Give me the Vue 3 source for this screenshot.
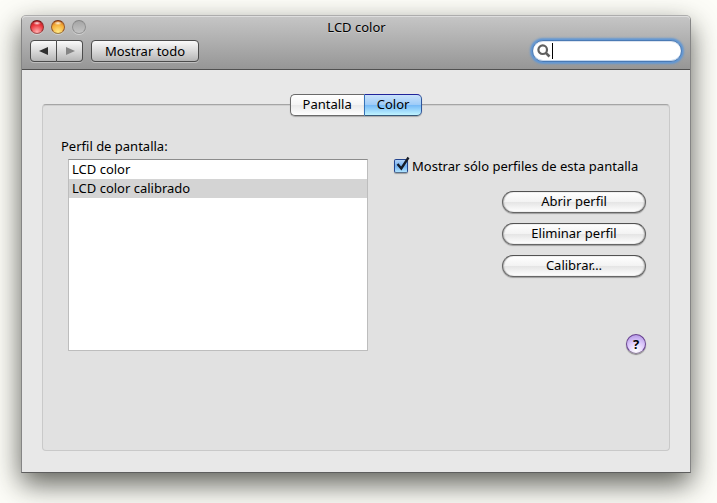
<template>
  <div class="desktop">
    <main class="window">
      <header class="toolbar">
        <div class="titlebar">
          <div class="lights">
            <button class="light red" type="button" aria-label="Cerrar"></button>
            <button class="light amber" type="button" aria-label="Minimizar"></button>
            <button class="light off" type="button" aria-label="Zoom" disabled></button>
          </div>
          <h1 class="title">LCD color</h1>
        </div>
        <div class="tools">
          <div class="nav">
            <button type="button" aria-label="Atrás">
              <svg width="10" height="10" viewBox="0 0 10 10"><path d="M9 1V9L0 5Z" fill="#303030" /></svg>
            </button>
            <button type="button" aria-label="Adelante" disabled>
              <svg width="10" height="10" viewBox="0 0 10 10"><path d="M1 1V9L10 5Z" fill="#858585" /></svg>
            </button>
          </div>
          <button class="show-all" type="button">Mostrar todo</button>
          <div class="search">
            <svg width="14" height="14" viewBox="0 0 14 14" fill="none" stroke="#606060">
              <circle cx="5.7" cy="5.7" r="4.3" stroke-width="2.2" />
              <path d="M8.8 8.8L12.5 12.5" stroke-width="2.6" />
            </svg>
            <span class="caret"></span>
            <input v-model="query" type="text" aria-label="Buscar" />
          </div>
        </div>
      </header>

      <div class="content">
        <div class="tabs" role="tablist">
          <button
            v-for="tab in tabs"
            :key="tab"
            type="button"
            role="tab"
            :aria-selected="tab === activeTab"
            :class="{ active: tab === activeTab }"
            @click="activeTab = tab"
          >{{ tab }}</button>
        </div>

        <section class="panel">
          <div class="profiles">
            <label for="profiles">Perfil de pantalla:</label>
            <select id="profiles" v-model="profile" size="10">
              <option v-for="item in profiles" :key="item" :value="item">{{ item }}</option>
            </select>
          </div>

          <div class="actions">
            <div class="check">
              <span class="box">
                <input id="only-display" v-model="onlyDisplay" type="checkbox" />
                <svg v-if="onlyDisplay" width="17" height="17" viewBox="0 0 17 17">
                  <path d="M3.5 8L7.3 12.5L14.5 1.5" fill="none" stroke="#161b26" stroke-width="2.3" />
                </svg>
              </span>
              <label for="only-display">Mostrar sólo perfiles de esta pantalla</label>
            </div>
            <button v-for="action in actions" :key="action" class="pill" type="button">{{ action }}</button>
            <button class="help" type="button" aria-label="Ayuda">?</button>
          </div>
        </section>
      </div>
    </main>
  </div>
</template>

<script setup>
import { ref } from 'vue'

const tabs = ['Pantalla', 'Color']
const activeTab = ref('Color')

const profiles = ['LCD color', 'LCD color calibrado']
const profile = ref('LCD color calibrado')

const actions = ['Abrir perfil', 'Eliminar perfil', 'Calibrar…']
const onlyDisplay = ref(true)
const query = ref('')
</script>

<style>
body {
  margin: 0;
  background: #fdfdf8;
}
</style>

<style scoped>
.desktop {
  box-sizing: border-box;
  display: flex;
  min-height: 100vh;
  padding: 15px 26px 30px 21px;
  overflow: hidden;
  font-family: "Noto Sans", "Open Sans", sans-serif;
  font-size: 13px;
  line-height: 18px;
  color: #000;
}

button,
input,
select {
  box-sizing: border-box;
  margin: 0;
  padding: 0;
  font: inherit;
  color: inherit;
}

.window {
  box-sizing: border-box;
  flex: 1;
  display: flex;
  flex-direction: column;
  border: 1px solid #858585;
  border-top-color: #adadad;
  border-bottom-color: #5e5e5e;
  border-radius: 5px 5px 0 0;
  background: #e8e8e8;
  box-shadow: 0 11px 28px rgba(25, 27, 20, 0.7);
}

/* toolbar */
.toolbar {
  padding: 1px 7px 7px 8px;
  border-bottom: 1px solid #505050;
  border-radius: 4px 4px 0 0;
  background: linear-gradient(#c6c6c6, #969696);
  box-shadow: inset 0 1px #dedede;
}

.titlebar {
  display: grid;
  grid-template-columns: 1fr auto 1fr;
  align-items: center;
  height: 20px;
}

.lights {
  display: flex;
  gap: 7px;
}

.light {
  width: 14px;
  height: 14px;
  border: 1px solid;
  border-radius: 50%;
  box-shadow: 0 1px rgba(255, 255, 255, 0.4);
}

.red {
  border-color: #701414 #923030 #a85454;
  background: radial-gradient(ellipse 4px 2px at 50% 18%, #ffe8e8, transparent), radial-gradient(circle at 50% 90%, #ffb0b0, #e9343a 60%, #9d1218);
}

.amber {
  border-color: #7c3510 #95592a #a07d40;
  background: radial-gradient(ellipse 4px 2px at 50% 18%, #fff4e0, transparent), radial-gradient(circle at 50% 90%, #ffe987, #f5ae38 60%, #b95012);
}

.off {
  border-color: #858585 #8f8f8f #999;
  background: linear-gradient(#a5a5a5, #c4c4c4);
}

.title {
  margin: 0;
  font-size: 13px;
  font-weight: 400;
  line-height: 18px;
  text-shadow: 0 1px rgba(255, 255, 255, 0.35);
}

.tools {
  display: flex;
  align-items: center;
  gap: 8px;
  margin-top: 3px;
}

.nav {
  display: flex;
}

.nav button,
.show-all {
  height: 22px;
  border: 1px solid #4c4c4c;
  border-radius: 4px;
  background: linear-gradient(#fafafa, #d9d9d9 50%, #b5b5b5);
  box-shadow: 0 1px rgba(255, 255, 255, 0.35);
}

.nav button {
  display: flex;
  align-items: center;
  justify-content: center;
  width: 27px;
}

.nav button:first-child {
  border-radius: 4px 0 0 4px;
}

.nav button:last-child {
  width: 26px;
  border-left: 0;
  border-radius: 0 4px 4px 0;
}

.show-all {
  width: 108px;
  line-height: 18px;
}

.search {
  display: flex;
  align-items: center;
  box-sizing: border-box;
  width: 150px;
  height: 22px;
  margin-right: 1px;
  margin-left: auto;
  padding-left: 4px;
  border: 1px solid #4a7ab4;
  border-radius: 11px;
  background: #fff;
  box-shadow: 0 0 0 1px #6598d2, 0 0 2px 2px #6598d2, inset 0 1px #dce4f0, inset 0 -1px #c3d7ef;
}

.search svg {
  flex: none;
}

.search input {
  flex: 1;
  min-width: 0;
  margin: 0 8px 0 2px;
  border: 0;
  outline: none;
  background: none;
  caret-color: transparent;
}

.caret {
  width: 1px;
  height: 16px;
  margin-left: 1px;
  background: #000;
}

/* content */
.content {
  flex: 1;
  display: flex;
  flex-direction: column;
  padding: 24px 20px 21px;
}

.tabs {
  z-index: 1;
  display: flex;
  align-self: center;
  margin-bottom: -12px;
}

.tabs button {
  height: 22px;
  padding: 0 12px 2px;
  border: 1px solid #6a6a6a;
  border-right: 0;
  border-radius: 5px 0 0 5px;
  background: linear-gradient(#fff, #f4f4f4 50%, #e9e9e9 50%, #fff);
  box-shadow: 0 1px 1px rgba(0, 0, 0, 0.25);
}

.tabs button:last-child {
  border-right: 1px solid #6a6a6a;
  border-radius: 0 5px 5px 0;
}

.tabs button.active {
  border-color: #20249a #30559a #365878 #3573b8;
  background: linear-gradient(#c9e2fb, #9dcbf8 50%, #74b8f7 50%, #c0f4ff);
}

.panel {
  flex: 1;
  display: flex;
  justify-content: space-between;
  padding: 32px 23px 32px 18px;
  border: 1px solid #c9c9c9;
  border-top-color: #a5a5a5;
  border-radius: 4px;
  background: #e1e1e1;
  box-shadow: inset 0 1px #d0d0d0;
}

.profiles {
  display: flex;
  flex-direction: column;
  align-items: flex-start;
  gap: 4px;
}

.profiles select {
  width: 300px;
  height: 192px;
  margin-left: 7px;
  overflow: hidden;
  border: 1px solid #bdbdbd;
  border-top-color: #8c8c8c;
  border-radius: 0;
  outline: none;
  background: #fff;
}

.profiles option {
  height: 19px;
  min-height: 19px;
  box-sizing: border-box;
  padding: 0 3px;
  line-height: 19px;
}

.profiles option:checked {
  background: linear-gradient(#d4d4d4, #d4d4d4);
  color: #000;
}

.actions {
  display: flex;
  flex-direction: column;
  align-items: flex-end;
  gap: 10px;
  width: 252px;
  padding-top: 20px;
}

.check {
  display: flex;
  align-items: center;
  align-self: stretch;
  gap: 4px;
  margin-bottom: 6px;
}

.box {
  position: relative;
  display: flex;
}

.box input {
  appearance: none;
  width: 14px;
  height: 14px;
  border: 1px solid #24458f;
  border-bottom-color: #57718f;
  border-radius: 2px;
  background: linear-gradient(#b3d3f7, #72b0f0 50%, #b0e4ff);
  box-shadow: 0 1px 1px rgba(0, 0, 0, 0.3);
}

.box svg {
  position: absolute;
  left: 0;
  bottom: 0;
  pointer-events: none;
}

.pill {
  width: 144px;
  height: 22px;
  padding-bottom: 2px;
  border: 1px solid #666;
  border-top-color: #525252;
  border-radius: 11px;
  background: linear-gradient(#fff, #f3f3f3 48%, #e5e5e5 52%, #fff);
  box-shadow: 0 1px 1px rgba(0, 0, 0, 0.3), inset 1px 0 1px #bbb, inset -1px 0 1px #bbb;
}

.help {
  width: 20px;
  height: 20px;
  margin-top: 47px;
  border: 1px solid #68428f;
  border-bottom-color: #8a7a96;
  border-radius: 50%;
  background: radial-gradient(circle at 50% 85%, #fff, #dcc8fb 50%, #a98be0);
  box-shadow: 0 1px 1px rgba(0, 0, 0, 0.4);
  font-weight: 700;
  line-height: 18px;
}
</style>
